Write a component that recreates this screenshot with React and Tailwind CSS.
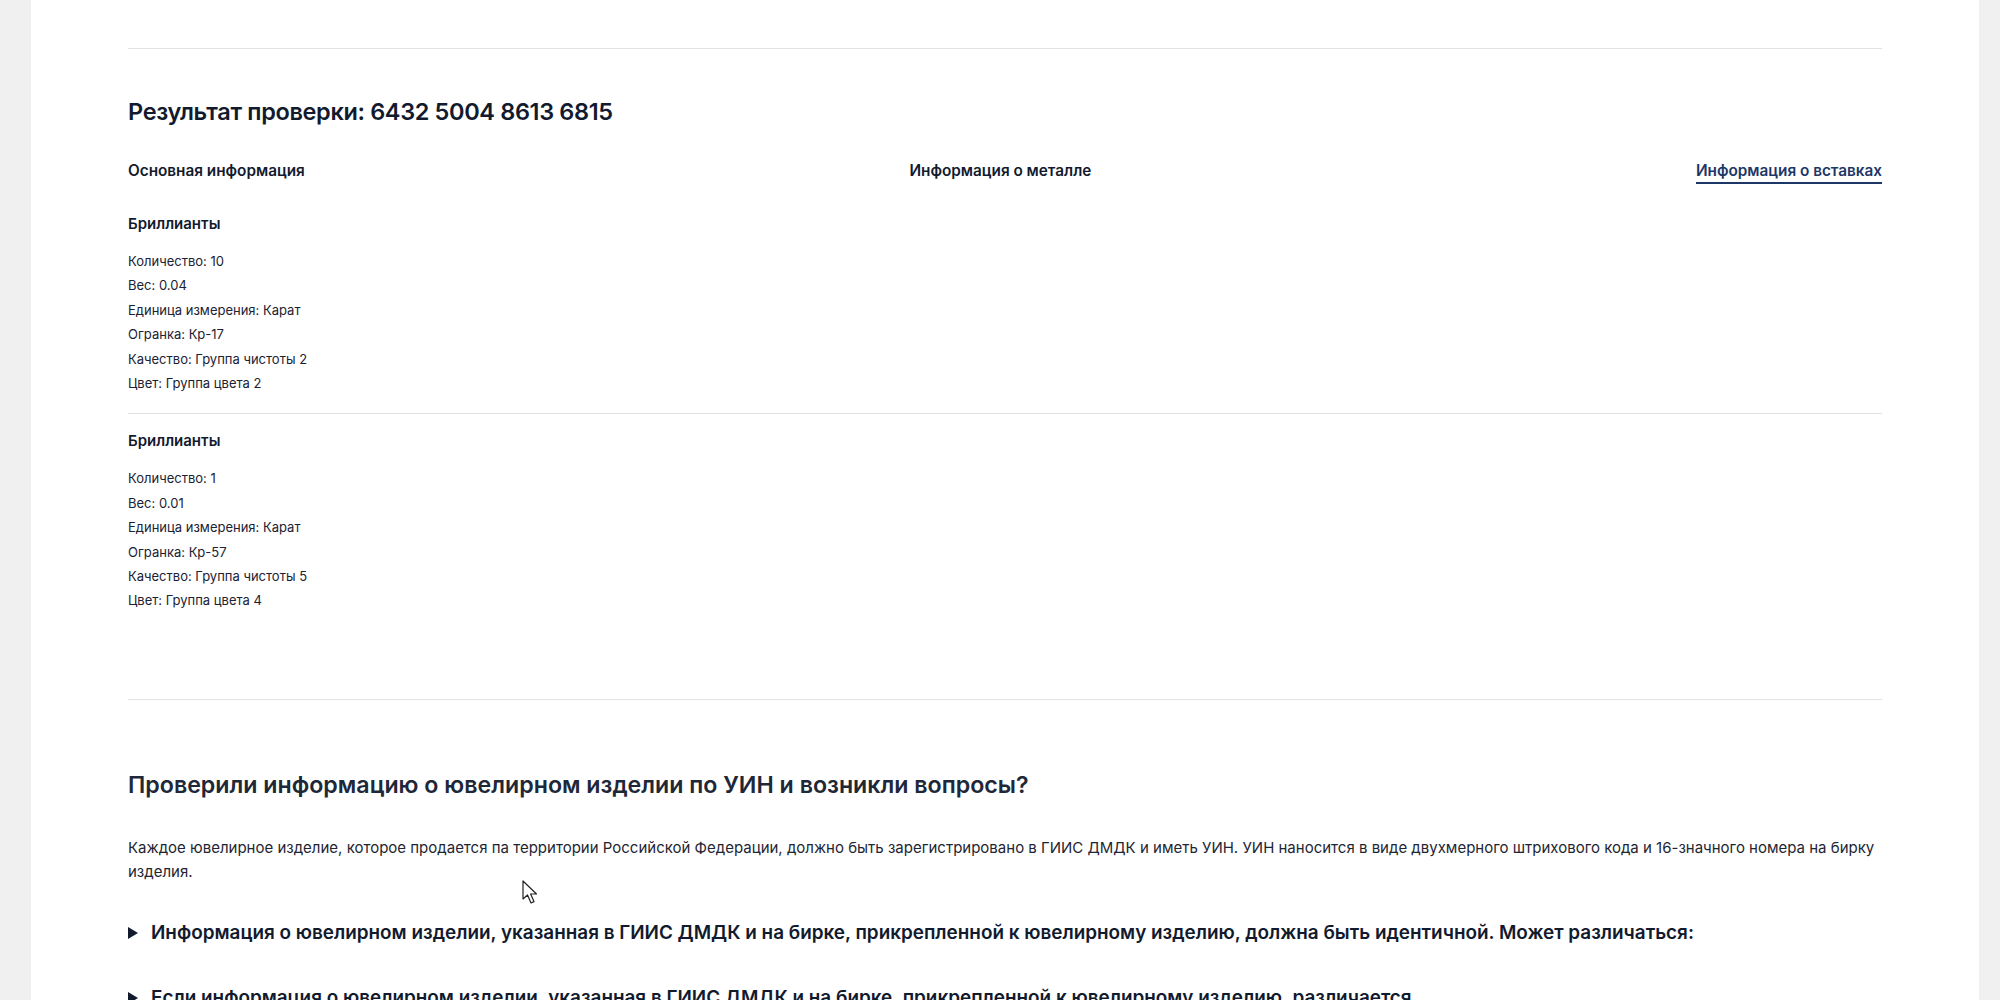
import React from "react";

const stones = [
  {
    title: "Бриллианты",
    rows: [
      "Количество: 10",
      "Вес: 0.04",
      "Единица измерения: Карат",
      "Огранка: Кр-17",
      "Качество: Группа чистоты 2",
      "Цвет: Группа цвета 2",
    ],
  },
  {
    title: "Бриллианты",
    rows: [
      "Количество: 1",
      "Вес: 0.01",
      "Единица измерения: Карат",
      "Огранка: Кр-57",
      "Качество: Группа чистоты 5",
      "Цвет: Группа цвета 4",
    ],
  },
];

const questions = [
  "Информация о ювелирном изделии, указанная в ГИИС ДМДК и на бирке, прикрепленной к ювелирному изделию, должна быть идентичной. Может различаться:",
  "Если информация о ювелирном изделии, указанная в ГИИС ДМДК и на бирке, прикрепленной к ювелирному изделию, различается",
];

const Cursor = () => (
  <svg
    className="absolute left-[522px] top-[880px] pointer-events-none"
    width="18"
    height="26"
    viewBox="0 0 18 26"
  >
    <path
      d="M1 1 L1 19 L5.5 15 L9 23 L12 21.6 L8.6 14 L14.5 14 Z"
      fill="#fff"
      stroke="#222"
      strokeWidth="1.2"
      strokeLinejoin="round"
    />
  </svg>
);

const App = () => {
  return (
    <div className="relative min-h-screen bg-[#f0f0f0] pl-[31px] pr-[21px] font-['Inter','Noto_Sans',sans-serif] text-[#121a2e]">
      <div className="bg-white min-h-screen px-[97px] pt-[48px] overflow-hidden">
        <div className="border-t border-[#e2e2e2]" />

        <h2 className="mt-[47px] text-[23.5px] leading-[32px] font-semibold tracking-[-0.35px]">
          Результат проверки: 6432 5004 8613 6815
        </h2>

        <div className="mt-[33px] flex justify-between items-start text-[15.3px] leading-[20px] font-semibold">
          <div>Основная информация</div>
          <div>Информация о металле</div>
          <div className="text-[#1d3767] border-b-2 border-[#1d3767] pb-[1px]">
            Информация о вставках
          </div>
        </div>

        <div className="mt-[28px]">
          {stones.map((s, i) => (
            <div
              key={i}
              className={
                i === 0
                  ? "pb-[18px] border-b border-[#e2e2e2]"
                  : "pt-[15px]"
              }
            >
              <div className="text-[15px] leading-[24px] font-semibold">
                {s.title}
              </div>
              <div className="mt-[13px] text-[13px] leading-[24.4px] text-[#1b2233]">
                {s.rows.map((r) => (
                  <div key={r}>{r}</div>
                ))}
              </div>
            </div>
          ))}
        </div>

        <div className="mt-[86px] border-t border-[#e2e2e2]" />

        <h2 className="mt-[70px] text-[23.2px] leading-[30px] font-semibold text-[#1e2838]">
          Проверили информацию о ювелирном изделии по УИН и возникли вопросы?
        </h2>

        <p className="mt-[36px] text-[15px] leading-[24px] text-[#1e2533]">
          Каждое ювелирное изделие, которое продается па территории Российской
          Федерации, должно быть зарегистрировано в ГИИС ДМДК и иметь УИН. УИН
          наносится в виде двухмерного штрихового кода и 16-значного номера на
          бирку изделия.
        </p>

        <div className="mt-[35px] flex flex-col gap-[37px]">
          {questions.map((q) => (
            <details key={q}>
              <summary className="list-none [&::-webkit-details-marker]:hidden flex items-center gap-[13px] cursor-pointer text-[18.9px] leading-[28px] font-semibold">
                <svg width="10" height="12" viewBox="0 0 10 12" className="shrink-0">
                  <path d="M0 0 L10 6 L0 12 Z" fill="#121a2e" />
                </svg>
                <span>{q}</span>
              </summary>
            </details>
          ))}
        </div>
      </div>
      <Cursor />
    </div>
  );
};

export default App;
